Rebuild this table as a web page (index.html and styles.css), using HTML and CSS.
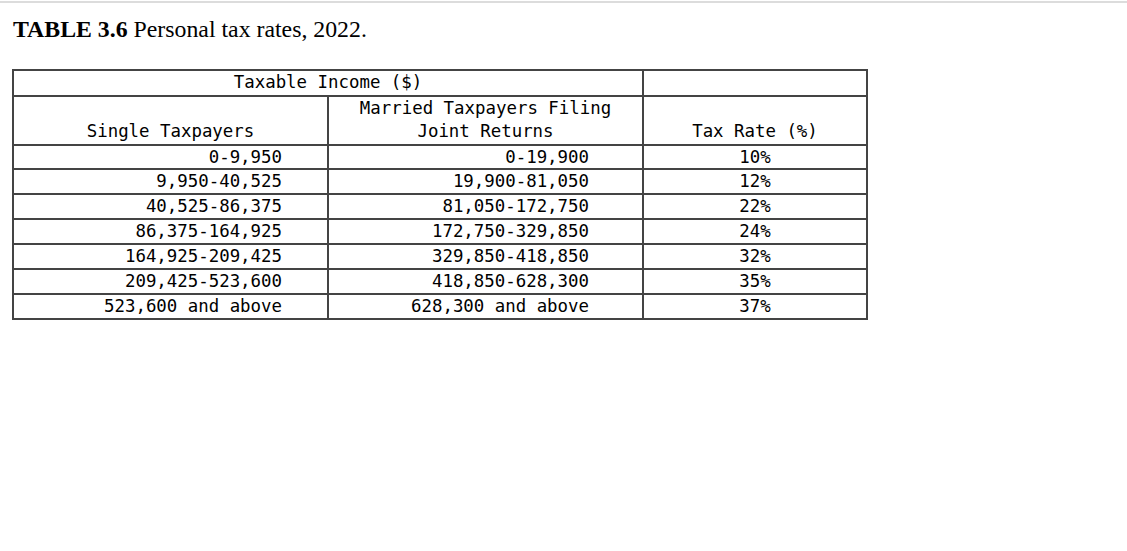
FILE: index.html
```html
<!DOCTYPE html>
<html>
<head>
<meta charset="utf-8">
<link rel="stylesheet" href="styles.css">
</head>
<body>
<div class="topline"></div>
<div class="page">
  <p class="title"><b>TABLE 3.6</b> Personal tax rates, 2022.</p>
  <table class="tax">
    <colgroup>
      <col class="c1"><col class="c2"><col class="c3">
    </colgroup>
    <tr class="h1">
      <td colspan="2" class="center">Taxable Income ($)</td>
      <td></td>
    </tr>
    <tr class="h2">
      <td class="center">Single Taxpayers</td>
      <td class="center">Married Taxpayers Filing<br>Joint Returns</td>
      <td class="center">Tax Rate (%)</td>
    </tr>
    <tr><td class="r1">0-9,950</td><td class="r2">0-19,900</td><td class="center">10%</td></tr>
    <tr><td class="r1">9,950-40,525</td><td class="r2">19,900-81,050</td><td class="center">12%</td></tr>
    <tr><td class="r1">40,525-86,375</td><td class="r2">81,050-172,750</td><td class="center">22%</td></tr>
    <tr><td class="r1">86,375-164,925</td><td class="r2">172,750-329,850</td><td class="center">24%</td></tr>
    <tr><td class="r1">164,925-209,425</td><td class="r2">329,850-418,850</td><td class="center">32%</td></tr>
    <tr><td class="r1">209,425-523,600</td><td class="r2">418,850-628,300</td><td class="center">35%</td></tr>
    <tr><td class="r1">523,600 and above</td><td class="r2">628,300 and above</td><td class="center">37%</td></tr>
  </table>
</div>
</body>
</html>
```

FILE: styles.css
```css
html, body {
  margin: 0;
  padding: 0;
  background: #fff;
}
.topline {
  margin-top: 1px;
  border-top: 2px solid #dcdcdc;
}
.page {
  padding-left: 12px;
}
.title {
  margin: 12px 0 0 1px;
  font-family: "Liberation Serif", "Times New Roman", serif;
  font-size: 23.8px;
  line-height: 28px;
  color: #000;
}
.title b {
  font-weight: bold;
}
.tax {
  margin-top: 26px;
  border-collapse: collapse;
  table-layout: fixed;
  width: 854px;
  font-family: "DejaVu Sans Mono", "Liberation Mono", monospace;
  font-size: 17.4px;
  color: #000;
}
.c1 { width: 315px; }
.c2 { width: 315px; }
.c3 { width: 224px; }
.tax td {
  border: 2px solid #444;
  padding: 0;
  line-height: 22.86px;
  vertical-align: bottom;
  white-space: nowrap;
}
.tax .h1 td { line-height: 23.5px; }
.tax .h2 td { line-height: 23.5px; }
.center { text-align: center; }
.r1 { text-align: right; padding-right: 45px !important; }
.r2 { text-align: right; padding-right: 53px !important; }
```
